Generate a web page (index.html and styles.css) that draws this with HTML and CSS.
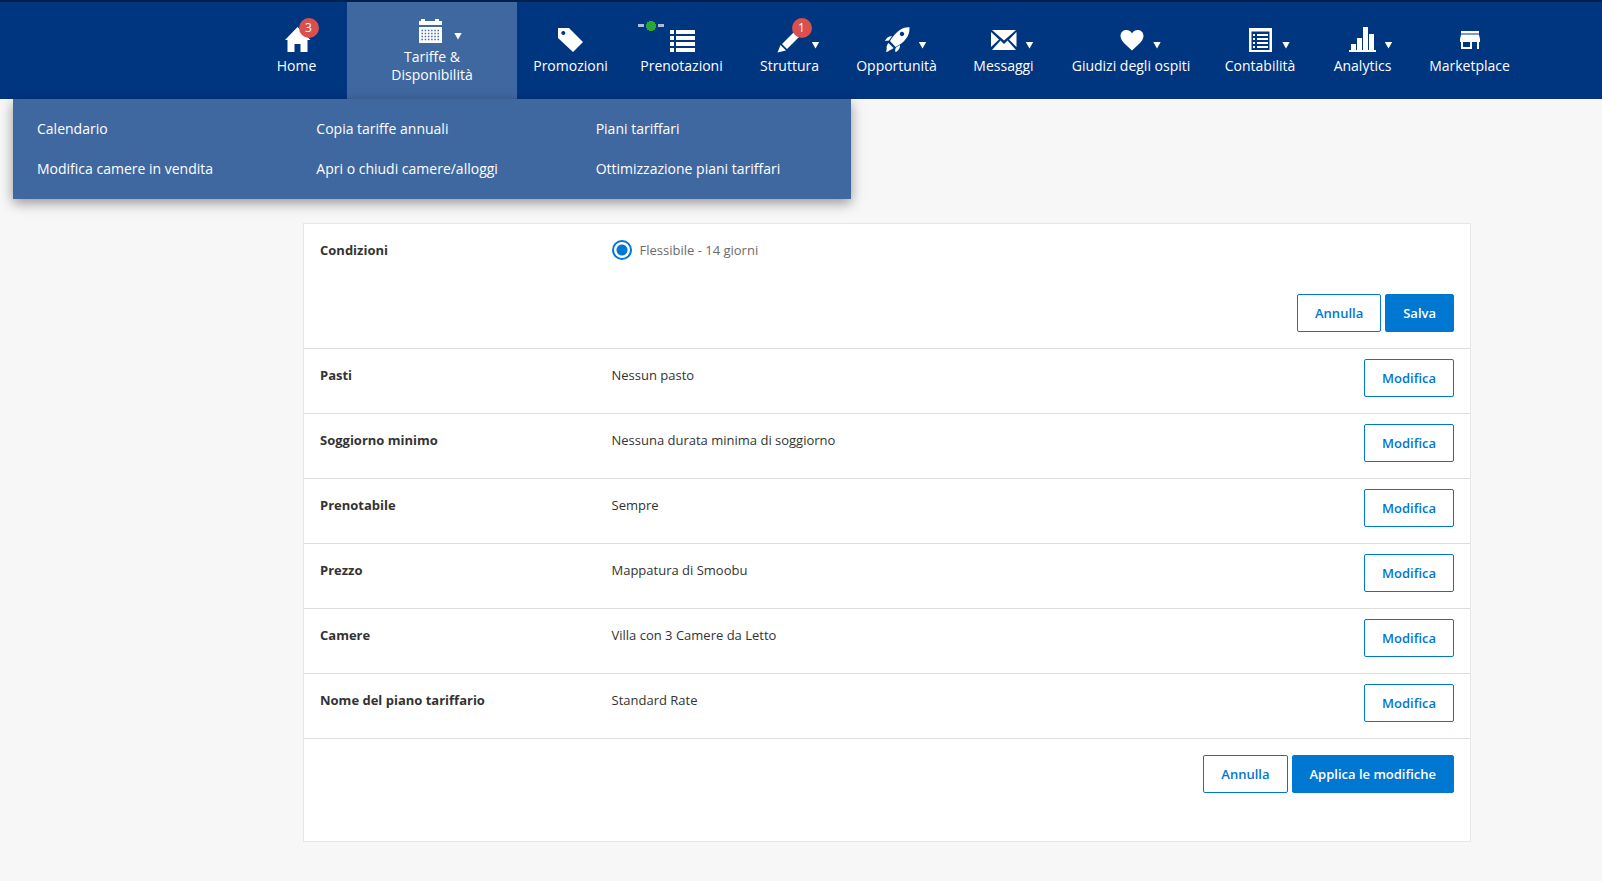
FILE: index.html
```html
<!DOCTYPE html>
<html lang="it">
<head>
    <meta charset="UTF-8">
    <meta name="viewport" content="width=device-width, initial-scale=1.0">
    <title>Piano tariffario</title>
    <link rel="stylesheet" href="styles.css">
</head>
<body>
    <header class="header">
        <nav class="nav">
            <a class="nav-item" href="#">
                <span class="nav-icon">
                    <svg viewBox="0 0 28 28"><path d="M14.500 0L27.500 13H24.500V25H17.500V17H11.500V25H4.500V13H2Z"/></svg>
                    <span class="badge">3</span>
                </span>
                <span>Home</span>
            </a>
            <a class="nav-item active" href="#">
                <span class="nav-icon">
                    <svg viewBox="0 0 28 28"><path d="M1 7V3H3V1H7V3H17V1H21V3H24V7ZM1 9H24V25H1Z"/><path class="calendar-dots" d="M3.500 12.500H21M3.500 15.500H21M3.500 18.500H21M3.500 21.500H21"/></svg>
                    <span class="caret"></span>
                </span>
                <span>Tariffe &amp;<br>Disponibilità</span>
            </a>
            <a class="nav-item" href="#">
                <span class="nav-icon">
                    <svg viewBox="0 0 28 28"><path fill-rule="evenodd" d="M1 1H12L26 15L16 25L1 11ZM6.300 4a2 2 0 1 0 .01 0Z"/></svg>
                </span>
                <span>Promozioni</span>
            </a>
            <a class="nav-item" href="#">
                <span class="nav-icon">
                    <svg viewBox="0 0 28 28"><path d="M2 3h4v4H2zM8 3h19v4H8zM2 9h4v4H2zM8 9h19v4H8zM2 15h4v4H2zM8 15h19v4H8zM2 21h4v4H2zM8 21h19v4H8z"/></svg>
                    <span class="status"></span>
                </span>
                <span>Prenotazioni</span>
            </a>
            <a class="nav-item" href="#">
                <span class="nav-icon">
                    <svg viewBox="0 0 28 28"><path d="M6 17L20 3L25 8L11 22ZM4.500 18L10 23.500L1.500 25.500Z"/></svg>
                    <span class="badge">1</span>
                    <span class="caret"></span>
                </span>
                <span>Struttura</span>
            </a>
            <a class="nav-item" href="#">
                <span class="nav-icon">
                    <svg viewBox="0 0 28 28"><path fill-rule="evenodd" d="M26.500 .3C22 0 18.500 1.500 15.500 4C12.500 6.500 9.500 9.500 7 14L12.500 20C17 17.500 20 15.500 22.800 12C25.500 9 26.700 5 26.500 .3ZM19 4.800a2.200 2.200 0 1 1-.01 0Z"/><path d="M2 14C3.500 11 5 9.500 9 9L6 13.500ZM12.500 25C12 23.500 12 22 13 20.500L17 18C17 21 16 23.500 12.500 25ZM5.500 16L10.500 21C9 23 6.500 22.500 5 24.500L3 25C3.500 23 4 22 3.500 20C4 18.500 4.500 17 5.500 16Z"/></svg>
                    <span class="caret"></span>
                </span>
                <span>Opportunità</span>
            </a>
            <a class="nav-item" href="#">
                <span class="nav-icon">
                    <svg viewBox="0 0 28 28"><path d="M2 3H26L14 13.500ZM1 5L9 12.500L1 20ZM26.500 5V20L19 12.500ZM2 23L10.500 13.500L14 17L17.500 13.500L26 23Z"/></svg>
                    <span class="caret"></span>
                </span>
                <span>Messaggi</span>
            </a>
            <a class="nav-item" href="#">
                <span class="nav-icon">
                    <svg viewBox="0 0 28 28"><path d="M15 23.500C11 19.500 3.500 14.500 3.500 9C3.500 5.500 6 3 9.200 3C12 3 14 4.500 15 6.500C16 4.500 18 3 20.800 3C24 3 26.500 5.500 26.500 9C26.500 14.500 19 19.500 15 23.500Z"/></svg>
                    <span class="caret"></span>
                </span>
                <span>Giudizi degli ospiti</span>
            </a>
            <a class="nav-item" href="#">
                <span class="nav-icon">
                    <svg viewBox="0 0 28 28"><path fill-rule="evenodd" d="M3 1H26V25H3ZM5.500 4.500V23H23.500V4.500Z"/><path d="M7 7h2v2H7zM11 7h11v2H11zM7 11h2v2H7zM11 11h11v2H11zM7 15h2v2H7zM11 15h11v2H11zM7 19h2v2H7zM11 19h11v2H11z"/></svg>
                    <span class="caret"></span>
                </span>
                <span>Contabilità</span>
            </a>
            <a class="nav-item" href="#">
                <span class="nav-icon">
                    <svg viewBox="0 0 28 28"><path d="M0 23h27v2H0zM2 17h5v6H2zM8 11h5v12H8zM14 0h5v23h-5zM20 7h5v16h-5z"/></svg>
                    <span class="caret"></span>
                </span>
                <span>Analytics</span>
            </a>
            <a class="nav-item" href="#">
                <span class="nav-icon">
                    <svg viewBox="0 0 28 28"><path d="M5 4h18v2H5z"/><path opacity=".5" d="M5 6h18v2H5z"/><path fill-rule="evenodd" d="M5 8H23L24 12V15H23V22H21V15H16V22H5V15H4V12ZM7 15V20H14V15Z"/></svg>
                </span>
                <span>Marketplace</span>
            </a>
        </nav>
        <div class="submenu">
            <a href="#">Calendario</a>
            <a href="#">Copia tariffe annuali</a>
            <a href="#">Piani tariffari</a>
            <a href="#">Modifica camere in vendita</a>
            <a href="#">Apri o chiudi camere/alloggi</a>
            <a href="#">Ottimizzazione piani tariffari</a>
        </div>
    </header>

    <main class="main">
        <form class="card">
            <div class="row">
                <strong class="row-label">Condizioni</strong>
                <div class="row-value">
                    <label class="radio">
                        <input type="radio" name="condizioni" checked>
                        Flessibile - 14 giorni
                    </label>
                </div>
                <div class="row-actions row-actions-below">
                    <button type="button" class="btn">Annulla</button>
                    <button type="button" class="btn btn-primary">Salva</button>
                </div>
            </div>
            <div class="row">
                <strong class="row-label">Pasti</strong>
                <div class="row-value">Nessun pasto</div>
                <div class="row-actions"><button type="button" class="btn">Modifica</button></div>
            </div>
            <div class="row">
                <strong class="row-label">Soggiorno minimo</strong>
                <div class="row-value">Nessuna durata minima di soggiorno</div>
                <div class="row-actions"><button type="button" class="btn">Modifica</button></div>
            </div>
            <div class="row">
                <strong class="row-label">Prenotabile</strong>
                <div class="row-value">Sempre</div>
                <div class="row-actions"><button type="button" class="btn">Modifica</button></div>
            </div>
            <div class="row">
                <strong class="row-label">Prezzo</strong>
                <div class="row-value">Mappatura di Smoobu</div>
                <div class="row-actions"><button type="button" class="btn">Modifica</button></div>
            </div>
            <div class="row">
                <strong class="row-label">Camere</strong>
                <div class="row-value">Villa con 3 Camere da Letto</div>
                <div class="row-actions"><button type="button" class="btn">Modifica</button></div>
            </div>
            <div class="row">
                <strong class="row-label">Nome del piano tariffario</strong>
                <div class="row-value">Standard Rate</div>
                <div class="row-actions"><button type="button" class="btn">Modifica</button></div>
            </div>
            <div class="card-footer">
                <button type="button" class="btn">Annulla</button>
                <button type="submit" class="btn btn-primary">Applica le modifiche</button>
            </div>
        </form>
    </main>
</body>
</html>
```

FILE: styles.css
```css
* {
    box-sizing: border-box;
}

body {
    margin: 0;
    background-color: #f7f7f7;
    color: #333;
    font-family: "Segoe UI", "Open Sans", "Noto Sans", sans-serif;
    font-size: 13px;
    line-height: 20px;
}

a {
    color: #fff;
    text-decoration: none;
}

/* Menu principale */
.header {
    position: relative;
    background-color: #003580;
    border-top: 2px solid #00214e;
}

.nav {
    display: grid;
    grid-template-columns: 101px 170px 107px 115px 101px 113px 101px 154px 104px 101px 113px;
    justify-content: end;
    min-height: 97px;
    padding-right: 76px;
}

.nav-item {
    display: flex;
    flex-direction: column;
    justify-content: center;
    text-align: center;
    white-space: nowrap;
    font-size: 14px;
    line-height: 18px;
}

.nav-item.active {
    background-color: #4068a0;
}

.nav-icon {
    position: relative;
    display: grid;
    grid-template-columns: 1fr 28px 1fr;
    height: 30px;
}

.nav-icon svg {
    grid-column: 2;
    width: 28px;
    height: 28px;
    fill: #fff;
}

.calendar-dots {
    stroke: #4068a0;
    stroke-width: 1.4;
    stroke-dasharray: 1.5 1.7;
}

.caret {
    width: 8px;
    height: 7px;
    margin: 15px 0 0 8px;
    background-color: #fff;
    clip-path: polygon(0 0, 100% 0, 50% 100%);
}

.badge {
    position: absolute;
    top: -9px;
    left: calc(50% + 2px);
    width: 20px;
    height: 20px;
    border-radius: 50%;
    background-color: #d9504e;
    font-size: 12px;
    line-height: 20px;
}

/* Indicatore verde con i due trattini */
.status {
    position: absolute;
    top: -6px;
    left: calc(50% - 44px);
    display: flex;
    align-items: center;
    justify-content: space-between;
    width: 26px;
    height: 10px;
    background: radial-gradient(circle, #28a832 5px, transparent 5px);
}

.status::before,
.status::after {
    content: "";
    width: 6px;
    height: 3px;
    background-color: #a9bcd8;
}

.submenu {
    position: absolute;
    top: 100%;
    left: 13px;
    display: grid;
    grid-template-columns: repeat(3, 1fr);
    width: 838px;
    padding: 10px 0;
    background-color: #4068a0;
    box-shadow: 0 4px 12px rgba(0, 0, 0, 0.4);
}

.submenu a {
    padding: 0 24px;
    font-size: 14px;
    line-height: 40px;
}

/* Scheda del piano tariffario */
.main {
    padding: 124px 131px 39px 303px;
}

.card {
    background-color: #fff;
    border: 1px solid #e6e6e6;
}

.row {
    display: grid;
    grid-template-columns: 25% 1fr auto;
    align-items: start;
    border-bottom: 1px solid #ddd;
}

.row-label,
.row-value {
    padding: 16px 16px 0;
}

.row-actions {
    padding: 10px 16px 16px;
}

.row-actions-below {
    grid-column: 1 / -1;
    padding-top: 34px;
}

.row-actions-below,
.card-footer {
    display: flex;
    justify-content: flex-end;
    gap: 4px;
}

.card-footer {
    padding: 16px 16px 48px;
}

.radio {
    display: flex;
    gap: 8px;
    color: #6b6b6b;
}

.radio input {
    appearance: none;
    width: 20px;
    height: 20px;
    margin: 0;
    border: 2px solid #0077d0;
    border-radius: 50%;
    background: radial-gradient(circle, #0077d0 5px, transparent 6px);
}

.btn {
    height: 38px;
    padding: 0 17px;
    border: 1px solid #0077d0;
    border-radius: 2px;
    background-color: #fff;
    color: #0077d0;
    font: inherit;
    font-weight: 600;
    cursor: pointer;
}

.btn-primary {
    background-color: #0077d0;
    color: #fff;
}
```
